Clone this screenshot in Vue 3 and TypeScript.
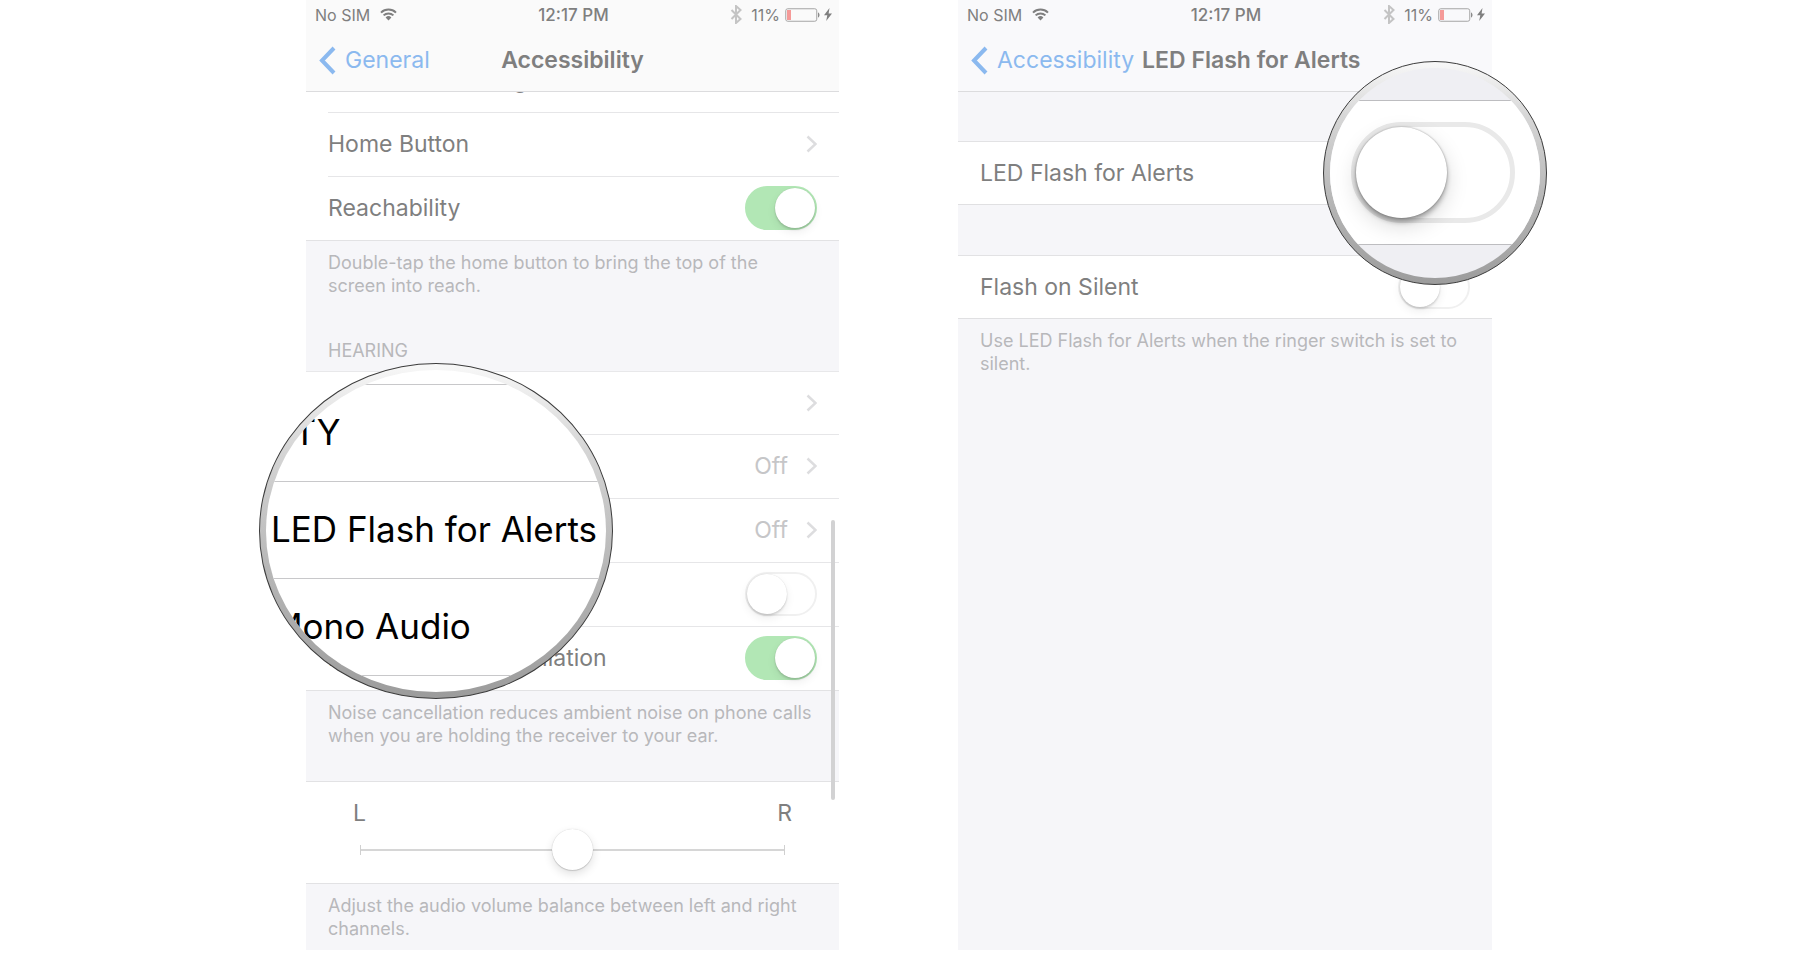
<script setup lang="ts">
import { ref } from 'vue'

interface Row {
  id: string
  label: string
  kind: 'link' | 'switch'
  value?: string
  covered?: boolean
}

const generalRows: Row[] = [
  { id: 'routing', label: 'Call Audio Routing', kind: 'link' },
  { id: 'home', label: 'Home Button', kind: 'link' },
  { id: 'reach', label: 'Reachability', kind: 'switch' },
]

// Rows lying wholly under the magnifier carry their name for assistive tech only.
const hearingRows: Row[] = [
  { id: 'aids', label: 'Hearing Aids', kind: 'link', covered: true },
  { id: 'tty', label: 'TTY', kind: 'link', value: 'Off', covered: true },
  { id: 'led', label: 'LED Flash for Alerts', kind: 'link', value: 'Off', covered: true },
  { id: 'mono', label: 'Mono Audio', kind: 'switch', covered: true },
  { id: 'noise', label: 'Phone Noise Cancellation', kind: 'switch' },
]

const groups = [
  { id: 'general', rows: generalRows },
  { id: 'hearing', rows: hearingRows },
]

const lensRows = ['TTY', 'LED Flash for Alerts', 'Mono Audio']

const switches = ref<Record<string, boolean>>({
  reach: true,
  mono: false,
  noise: true,
})
const balance = ref(50)
const ledFlash = ref(false)
const flashOnSilent = ref(false)

const screens = [
  { id: 'accessibility', back: 'General', title: 'Accessibility' },
  { id: 'flash', back: 'Accessibility', title: 'LED Flash for Alerts' },
]
</script>

<template>
  <main class="stage">
    <section v-for="s in screens" :key="s.id" class="phone" :class="s.id">
      <header class="top">
        <div class="status">
          <div class="carrier">
            <span>No SIM</span>
            <svg class="wifi" viewBox="0 0 17 13" aria-hidden="true">
              <path d="M1 4.6a10.8 10.8 0 0 1 15 0" />
              <path d="M3.6 7.4a7 7 0 0 1 9.8 0" />
              <path class="solid" d="M5.6 9.5a4.2 4.2 0 0 1 5.8 0L8.5 12.6z" />
            </svg>
          </div>
          <strong class="time">12:17 PM</strong>
          <div class="power">
            <svg class="bluetooth" viewBox="0 0 12 19" aria-hidden="true">
              <path d="M1.5 5 10.5 14 6 18V1l4.500 4-9 9" />
            </svg>
            <span>11%</span>
            <svg class="battery" viewBox="0 0 36 14" aria-hidden="true">
              <rect class="case" x=".75" y=".75" width="31" height="12.500" rx="2" />
              <rect class="charge" x="2" y="2" width="4" height="10" />
              <path class="nub" d="M33 4.500c2 .6 2 4.400 0 5z" />
            </svg>
            <svg class="bolt" viewBox="0 0 8 13" aria-hidden="true">
              <path d="M5.500 0 0 7.200h3.300L2.200 13 8 5.500H4.600z" />
            </svg>
          </div>
        </div>
        <nav class="nav">
          <a class="back" href="#">
            <svg viewBox="0 0 18 29" aria-hidden="true"><path d="M16 2 4 14.500 16 27" /></svg>
            <span>{{ s.back }}</span>
          </a>
          <h1>{{ s.title }}</h1>
        </nav>
      </header>

      <div v-if="s.id === 'accessibility'" class="scroll">
        <template v-for="g in groups" :key="g.id">
          <h2 v-if="g.id === 'hearing'" class="heading">HEARING</h2>
          <ul class="list" :class="g.id">
            <li v-for="r in g.rows" :key="r.id">
              <a v-if="r.kind === 'link'" class="row" href="#" :aria-label="r.label">
                <span class="label">{{ r.covered ? '' : r.label }}</span>
                <span v-if="r.value" class="value">{{ r.value }}</span>
                <svg class="chevron" viewBox="0 0 11 18" aria-hidden="true"><path d="M1.500 1.500 9.500 9l-8 7.500" /></svg>
              </a>
              <label v-else class="row">
                <span class="label">{{ r.covered ? '' : r.label }}</span>
                <input v-model="switches[r.id]" class="switch" type="checkbox" role="switch" :aria-label="r.label" />
              </label>
            </li>
          </ul>
          <p v-if="g.id === 'general'" class="note reach-note">
            Double-tap the home button to bring the top of the screen into reach.
          </p>
          <p v-else class="note noise-note">
            Noise cancellation reduces ambient noise on phone calls when you are holding the receiver to your ear.
          </p>
        </template>
        <div class="balance">
          <div class="ends"><span>L</span><span>R</span></div>
          <input v-model.number="balance" type="range" min="0" max="100" aria-label="Audio volume balance" />
        </div>
        <p class="note">Adjust the audio volume balance between left and right channels.</p>
        <div class="scrollbar"></div>
      </div>

      <div v-else class="form">
        <label class="row single">
          <span class="label">LED Flash for Alerts</span>
          <input v-model="ledFlash" class="switch" type="checkbox" role="switch" />
        </label>
        <label class="row single">
          <span class="label">Flash on Silent</span>
          <input v-model="flashOnSilent" class="switch" type="checkbox" role="switch" />
        </label>
        <p class="note">Use LED Flash for Alerts when the ringer switch is set to silent.</p>
      </div>

      <div v-if="s.id === 'accessibility'" class="lens lens-list">
        <ul class="glass">
          <li v-for="t in lensRows" :key="t">{{ t }}</li>
        </ul>
      </div>
      <div v-else class="lens lens-switch">
        <div class="glass">
          <div class="band">
            <input v-model="ledFlash" class="switch large" type="checkbox" role="switch" aria-label="LED Flash for Alerts" />
          </div>
        </div>
      </div>
    </section>
  </main>
</template>

<style>
body {
  margin: 0;
  background: #fff;
}
</style>

<style scoped>
.stage {
  display: grid;
  grid-template-columns: 533fr 534fr;
  column-gap: 119px;
  padding: 0 323px 0 306px;
  font-family: Inter, 'Liberation Sans', sans-serif;
  font-size: 23px;
  line-height: 28px;
  color: #7f7f7f;
}
.phone {
  position: relative;
  background: #f6f6f9;
  min-width: 0;
}
h1,
h2,
p,
ul {
  margin: 0;
  padding: 0;
  font-weight: 400;
  list-style: none;
}
a {
  color: inherit;
  text-decoration: none;
}
svg {
  display: block;
  flex: none;
  fill: none;
}

/* Header */
.top {
  position: relative;
  z-index: 1;
  background: #fafafa;
  border-bottom: 1px solid #dcdcde;
}
.flash .top {
  background: #f9f9fb;
}
.status {
  display: grid;
  grid-template-columns: 1fr auto 1fr;
  align-items: center;
  height: 29px;
  padding: 0 7px 0 9px;
  font-size: 16px;
  line-height: 20px;
}
.time {
  font-size: 17px;
  font-weight: 500;
}
.carrier,
.power {
  display: flex;
  align-items: center;
}
.carrier {
  gap: 10px;
}
.power {
  justify-content: flex-end;
}
.wifi {
  width: 17px;
  height: 13px;
  stroke: #7f7f7f;
  stroke-width: 2;
}
.wifi .solid {
  fill: #7f7f7f;
  stroke: none;
}
.bluetooth {
  width: 12px;
  height: 19px;
  margin-right: 9px;
  stroke: #c4c4c4;
  stroke-width: 2;
}
.battery {
  width: 36px;
  height: 14px;
  margin: 0 3px 0 5px;
}
.case {
  stroke: #a5a5a5;
  stroke-width: 1;
}
.charge {
  fill: #f59a98;
}
.nub {
  fill: #8a8a8a;
}
.bolt {
  width: 8px;
  height: 13px;
  fill: #7f7f7f;
}
.nav {
  display: grid;
  grid-template-columns: 1fr auto 1fr;
  column-gap: 8px;
  align-items: center;
  height: 62px;
  padding: 0 12px;
}
.back {
  display: flex;
  align-items: center;
  gap: 9px;
  color: #8bb9ef;
}
.back svg {
  width: 18px;
  height: 29px;
  stroke: #8bb9ef;
  stroke-width: 4;
}
h1 {
  font-size: 23px;
  font-weight: 600;
  line-height: 28px;
  white-space: nowrap;
}

/* Lists */
.scroll {
  position: relative;
  margin-top: -43px;
}
.list {
  background: #fff;
  border-bottom: 1px solid #e2e2e4;
}
.hearing {
  border-top: 1px solid #e8e8ea;
}
.list li {
  padding-left: 22px;
}
.row {
  display: flex;
  align-items: center;
  box-sizing: border-box;
  height: 64px;
  padding: 0 22px 1px 0;
  border-bottom: 1px solid #e6e6e8;
}
.list li:last-child .row {
  height: 63px;
  border-bottom: 0;
}
.hearing li:first-child .row {
  height: 63px;
}
.label {
  flex: 1;
}
.value {
  margin-right: 18px;
  color: #c6c6c8;
}
.chevron {
  width: 11px;
  height: 18px;
  stroke: #dddddf;
  stroke-width: 2.500;
}
.note,
.heading {
  padding: 10px 22px;
  font-size: 18px;
  line-height: 23px;
  color: #b8b8bb;
}
.heading {
  padding-top: 0;
  padding-bottom: 9px;
}
.reach-note {
  padding-bottom: 42px;
}
.noise-note {
  padding-bottom: 34px;
}
.switch {
  appearance: none;
  flex: none;
  box-sizing: border-box;
  width: 72px;
  height: 44px;
  margin: 0;
  padding: 0;
  border: 2px solid #f0f0f0;
  border-radius: 22px;
  background: #fff;
}
.switch::before {
  content: '';
  display: block;
  width: 40px;
  height: 40px;
  border-radius: 50%;
  background: #fff;
  box-shadow: 0 2px 2px rgba(0, 0, 0, 0.12), 0 4px 10px rgba(0, 0, 0, 0.07), 0 0 1px rgba(0, 0, 0, 0.16);
}
.switch:checked {
  border-color: #b2e7b5;
  background: #b2e7b5;
}
.switch:checked::before {
  margin-left: 28px;
}

/* Balance slider */
.balance {
  padding: 17px 54px 13px;
  background: #fff;
  border-top: 1px solid #e2e2e4;
  border-bottom: 1px solid #e2e2e4;
}
.ends {
  display: flex;
  justify-content: space-between;
  margin: 0 -7px 2px;
}
.balance input {
  appearance: none;
  display: block;
  width: 100%;
  height: 41px;
  margin: 0;
  background: transparent;
}
.balance input::-webkit-slider-runnable-track {
  height: 10px;
  border: solid #d0d0d0;
  border-width: 0 1px;
  background: linear-gradient(#d6d6d6, #d6d6d6) center / 100% 2px no-repeat;
}
.balance input::-webkit-slider-thumb {
  appearance: none;
  width: 41px;
  height: 41px;
  margin-top: -16px;
  border-radius: 50%;
  background: #fff;
  box-shadow: 0 1px 1px rgba(0, 0, 0, 0.14), 0 4px 10px rgba(0, 0, 0, 0.12), 0 0 1px rgba(0, 0, 0, 0.2);
}
.scrollbar {
  position: absolute;
  top: 471px;
  right: 4px;
  width: 4px;
  height: 280px;
  border-radius: 2px;
  background: #d2d2d3;
}

/* Flash settings */
.single {
  margin-top: 49px;
  padding-left: 22px;
  background: #fff;
  border-top: 1px solid #e2e2e4;
  border-bottom-color: #e0e0e2;
}
.single + .single {
  margin-top: 50px;
}

/* Magnifiers */
.lens {
  position: absolute;
  z-index: 2;
  box-sizing: border-box;
  padding: 6px;
  border: 1px solid #3c3c3c;
  border-radius: 50%;
  background: linear-gradient(#f8f8f8, #d6d6d6 25%, #b8b8b8 60%, #9c9c9c);
}
.glass {
  height: 100%;
  overflow: hidden;
  border-radius: 50%;
  background: #fff;
}
.lens-list {
  top: 363px;
  left: -47px;
  width: 354px;
  height: 336px;
}
.lens-list .glass {
  box-sizing: border-box;
  padding-top: 14px;
  font-size: 35px;
  line-height: 94px;
  color: #000;
}
.glass li {
  padding: 0 0 2px 5px;
  border-top: 1px solid #c8c8ca;
  white-space: nowrap;
}
.glass li:last-child {
  border-bottom: 1px solid #c8c8ca;
}
.lens-switch {
  top: 61px;
  right: -55px;
  width: 224px;
  height: 224px;
}
.lens-switch .glass {
  display: flex;
  flex-direction: column;
  justify-content: center;
  background: #efeff3;
}
.band {
  display: flex;
  align-items: center;
  justify-content: center;
  height: 143px;
  padding-right: 4px;
  margin-bottom: 1px;
  border: solid #bdbdc0;
  border-width: 1px 0;
  background: #fff;
}
.large {
  width: 164px;
  height: 101px;
  border: 5px solid #e9e9e9;
  border-radius: 51px;
}
.large::before {
  width: 91px;
  height: 91px;
  box-shadow: 0 4px 5px rgba(0, 0, 0, 0.3), 0 8px 22px rgba(0, 0, 0, 0.15), 0 0 2px rgba(0, 0, 0, 0.35);
}
</style>
